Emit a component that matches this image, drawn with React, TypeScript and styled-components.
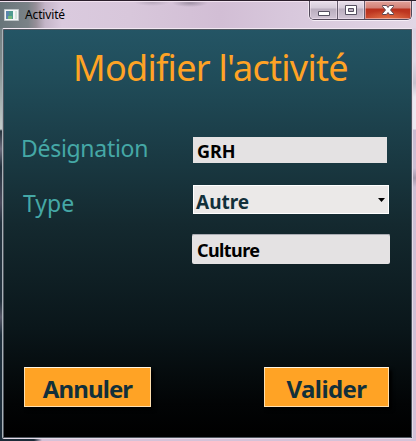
import React from "react";
import styled, { createGlobalStyle } from "styled-components";

const GlobalStyle = createGlobalStyle`
  * { box-sizing: border-box; }
  html, body { margin: 0; padding: 0; overflow: hidden; }
  body { font-family: "Noto Sans", "Open Sans", sans-serif; }
`;

const Window = styled.div`
  width: 416px;
  height: 441px;
  padding: 0 3px 2px 2px;
  border-top: 1px solid #2b1f2c;
  display: flex;
  flex-direction: column;
  background:
    linear-gradient(90deg, #1b2b38 0 34px, rgba(27, 43, 56, 0) 42px) 0 100% / 100% 3px no-repeat,
    linear-gradient(180deg, #626f73 0, #748084 28px, #7f8b8c 60px, #c4cccb 128px, #26343e 130px, #6c6c7d 148px, #22313d 166px, #4b4b5d 202px, #22313d 222px, #22313d 300px, #565868 316px, #1d2e3b 334px, #1b2b38 440px) 0 0 / 3px 100% no-repeat,
    linear-gradient(180deg, #dccbdf 0, #e2d6e4 60px, #c9c0cd 82px, #eee6ef 96px, #eee6ef 128px, #cdb8d0 129px, #d0bdd4 167px, #a898ac 177px, #d0bdd4 186px, #d3bfd7 440px) 100% 0 / 5px 100% no-repeat,
    linear-gradient(180deg, #f3e4f3 0, #d6c2d8 1px, #d5c2d8 100%);
`;

const TitleBar = styled.header`
  height: 27px;
  flex: none;
  display: flex;
  align-items: flex-start;
  margin: 0 -3px 0 -2px;
  padding: 0 4px 0 4px;
  border-top: 1px solid #f1e2f0;
  background:
    radial-gradient(ellipse 18px 4px at 190px 1px, #a092a6, rgba(160, 146, 166, 0)),
    radial-gradient(ellipse 18px 4px at 152px 0, #b6a7bb, rgba(182, 167, 187, 0)),
    linear-gradient(90deg, #68757a 0, #7a8287 28px, #978f99 36px, #c4b5c8 45px, #dacade 62px, #d8c7db 130px, #d2bed5 220px, #d8c8dc 290px, #e2d6e5 100%);
`;

const AppIcon = styled.svg`
  width: 16px;
  height: 14px;
  margin-top: 6px;
  flex: none;
`;

const Caption = styled.span`
  margin: 4px 0 0 5px;
  font-size: 12px;
  line-height: 17px;
  letter-spacing: -0.15px;
  color: #000;
  flex: 1;
`;

const Controls = styled.div`
  display: flex;
  width: 103px;
  height: 19px;
  margin-top: -1px;
  border: 1px solid #51495a;
  border-top: 0;
  border-radius: 0 0 5px 5px;
  overflow: hidden;
  box-shadow: 0 1px 0 #f5edf6, 1px 0 0 #efe5f0, -1px 0 0 #efe5f0;
`;

const ControlButton = styled.button<{ $width: number; $danger?: boolean }>`
  width: ${(p) => p.$width}px;
  height: 18px;
  padding: 0;
  border: 0;
  border-right: ${(p) => (p.$danger ? "0" : "1px solid #645b6c")};
  display: block;
  line-height: 0;
  background: ${(p) =>
    p.$danger
      ? "radial-gradient(ellipse 26px 9px at 50% 100%, rgba(235,130,80,.75), rgba(235,130,80,0)), linear-gradient(180deg, #e2a39a 0, #d28075 7px, #b9301c 8px, #c7442b 100%)"
      : "linear-gradient(180deg, #e9e0eb 0, #d5cbd9 7px, #b9adbe 8px, #d0c4d4 100%)"};
  box-shadow: inset 0 0 0 1px rgba(255, 240, 250, 0.45);
`;

const Client = styled.main`
  flex: 1;
  min-height: 0;
  border: 1px solid #e6dce8;
  border-top-color: #f2e8f2;
  border-left-color: #a9b2b8;
  border-radius: 2px;
  box-shadow: inset 0 0 0 1px #4f565f;
  background: linear-gradient(180deg, #245565 0, #204c59 50px, #1c404b 100px, #14292f 195px, #0a161a 300px, #020405 375px, #000 405px);
  display: flex;
  flex-direction: column;
  padding: 0 22px 0 19px;
`;

const Heading = styled.h1`
  margin: 14px 0 0 51px;
  height: 49px;
  font-size: 36px;
  line-height: 49px;
  font-weight: 400;
  white-space: nowrap;
  letter-spacing: -0.73px;
  color: #ffa325;
`;

const Form = styled.form`
  display: grid;
  grid-template-columns: 170px 1fr;
  grid-template-rows: 26px 22px 29px 20px 30px;
  margin-top: 45px;
`;

const Label = styled.label<{ $row: number; $indent?: number; $drop?: number; $spacing?: number }>`
  grid-column: 1;
  grid-row: ${(p) => p.$row};
  padding-left: ${(p) => p.$indent ?? 0}px;
  padding-top: ${(p) => p.$drop ?? 0}px;
  margin-left: -1px;
  font-size: 23px;
  line-height: 22px;
  letter-spacing: ${(p) => p.$spacing ?? 0}px;
  white-space: nowrap;
  color: #45a8a6;
`;

const Field = styled.div<{ $row: number; $width: number; $offset?: number; $raised?: boolean }>`
  grid-column: 2;
  grid-row: ${(p) => p.$row};
  width: ${(p) => p.$width}px;
  margin-left: ${(p) => p.$offset ?? 0}px;
  padding-left: ${(p) => (p.$raised ? 5 : 4)}px;
  display: flex;
  align-items: center;
  font-size: 18px;
  font-weight: 700;
  line-height: 30px;
  color: #000;
  background: #e4e2e3;
  border-radius: ${(p) => (p.$raised ? "2px" : "0")};
  box-shadow: ${(p) => (p.$raised ? "inset 0 1px 0 #a9abb2" : "none")};
`;

const Select = styled.div`
  grid-column: 2;
  grid-row: 3;
  width: 196px;
  margin-left: 1px;
  padding: 0 3px 0 2px;
  border: 1px solid #fff;
  display: flex;
  align-items: center;
  justify-content: space-between;
  font-size: 19px;
  font-weight: 700;
  color: #12303a;
  background: #ebe9e8;
`;

const Value = styled.span<{ $spacing?: number; $drop?: number }>`
  letter-spacing: ${(p) => p.$spacing ?? 0}px;
  padding-top: ${(p) => p.$drop ?? 0}px;
`;

const Actions = styled.footer`
  display: flex;
  justify-content: space-between;
  margin: 103px 1px 0 2px;
`;

const ActionButton = styled.button<{ $width: number; $spacing: number }>`
  width: ${(p) => p.$width}px;
  height: 40px;
  padding: 3px 0 0;
  font-family: inherit;
  font-size: 24px;
  line-height: 36px;
  font-weight: 700;
  letter-spacing: ${(p) => p.$spacing}px;
  color: #12303a;
  background: #ffa325;
  border: 1px solid #ffdfae;
  border-top-color: #fff4e2;
  box-shadow: 3px 3px 3px #000;
`;

export default function App() {
  return (
    <>
      <GlobalStyle />
      <Window>
        <TitleBar>
          <AppIcon viewBox="0 0 16 14">
            <path d="M.5 1.5h14v11H.5z" fill="#f4f5f6" stroke="#bfc6c9" />
            <path d="M2 3h7v8H2z" fill="#4f9b8f" />
            <path d="M2 3h3v8H2z" fill="#5b86ad" />
            <path d="M4 8h4v3H4z" fill="#73b77b" />
            <path d="M11 3h2v8h-2z" fill="#d4e5dd" />
          </AppIcon>
          <Caption>Activité</Caption>
          <Controls>
            <ControlButton $width={28} aria-label="Réduire">
              <svg width="27" height="18">
                <path d="M8.500 10.500h11v4h-11z" fill="#fff" stroke="#555061" />
              </svg>
            </ControlButton>
            <ControlButton $width={27} aria-label="Agrandir">
              <svg width="26" height="18">
                <path d="M7.500 4.500h11v9h-11zM10.500 7.500v3h5v-3z" fillRule="evenodd" fill="#fff" stroke="#555061" />
              </svg>
            </ControlButton>
            <ControlButton $width={46} $danger aria-label="Fermer">
              <svg width="46" height="18">
                <path d="M17.500 4.500h4l1.500 2 1.500-2h4v1l-3 3.500 3 3.500v1h-4l-1.500-2-1.500 2h-4v-1l3-3.500-3-3.500z" fill="#fff" stroke="#5d4650" />
              </svg>
            </ControlButton>
          </Controls>
        </TitleBar>
        <Client>
          <Heading>Modifier l'activité</Heading>
          <Form>
            <Label $row={1} $spacing={-0.3}>Désignation</Label>
            <Field $row={1} $width={194} $offset={1}>
              <Value $drop={2}>GRH</Value>
            </Field>
            <Label $row={3} $indent={2} $drop={7}>Type</Label>
            <Select>
              <Value $drop={5}>Autre</Value>
              <svg width="7" height="4">
                <path d="M0 0h7L3.500 4z" fill="#000" />
              </svg>
            </Select>
            <Field $row={5} $width={198} $raised>
              <Value $drop={1} $spacing={-0.6}>Culture</Value>
            </Field>
          </Form>
          <Actions>
            <ActionButton $width={127} $spacing={-0.9}>Annuler</ActionButton>
            <ActionButton $width={125} $spacing={-0.6}>Valider</ActionButton>
          </Actions>
        </Client>
      </Window>
    </>
  );
}
